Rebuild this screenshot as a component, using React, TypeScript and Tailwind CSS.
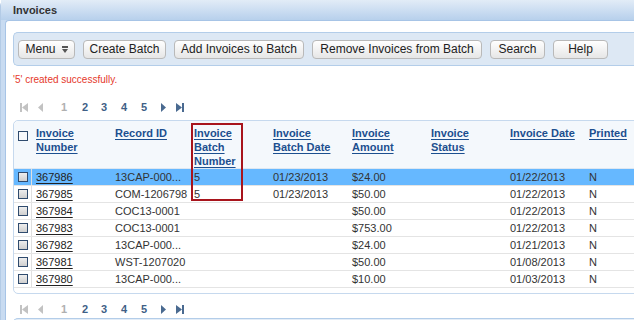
import React from "react";

interface InvoiceRow {
  number: string;
  recordId: string;
  batchNumber: string;
  batchDate: string;
  amount: string;
  status: string;
  invoiceDate: string;
  printed: string;
}

const rows: InvoiceRow[] = [
  { number: "367986", recordId: "13CAP-000...", batchNumber: "5", batchDate: "01/23/2013", amount: "$24.00", status: "", invoiceDate: "01/22/2013", printed: "N" },
  { number: "367985", recordId: "COM-1206798", batchNumber: "5", batchDate: "01/23/2013", amount: "$50.00", status: "", invoiceDate: "01/22/2013", printed: "N" },
  { number: "367984", recordId: "COC13-0001", batchNumber: "", batchDate: "", amount: "$50.00", status: "", invoiceDate: "01/22/2013", printed: "N" },
  { number: "367983", recordId: "COC13-0001", batchNumber: "", batchDate: "", amount: "$753.00", status: "", invoiceDate: "01/22/2013", printed: "N" },
  { number: "367982", recordId: "13CAP-000...", batchNumber: "", batchDate: "", amount: "$24.00", status: "", invoiceDate: "01/21/2013", printed: "N" },
  { number: "367981", recordId: "WST-1207020", batchNumber: "", batchDate: "", amount: "$50.00", status: "", invoiceDate: "01/08/2013", printed: "N" },
  { number: "367980", recordId: "13CAP-000...", batchNumber: "", batchDate: "", amount: "$10.00", status: "", invoiceDate: "01/03/2013", printed: "N" },
];

const headers: string[][] = [
  ["Invoice", "Number"],
  ["Record ID"],
  ["Invoice", "Batch", "Number"],
  ["Invoice", "Batch Date"],
  ["Invoice", "Amount"],
  ["Invoice", "Status"],
  ["Invoice Date"],
  ["Printed"],
];

function Pager() {
  const on = "#4a6a90";
  const off = "#c2c2c2";
  return (
    <div className="flex items-center h-[14px] text-[11px] font-bold leading-[14px]">
      <svg className="ml-[7px]" width="8" height="9" viewBox="0 0 8 9">
        <rect x="0" y="0" width="2" height="9" fill={off} />
        <polygon points="8,0 2,4.5 8,9" fill={off} />
      </svg>
      <svg className="ml-[10px]" width="5" height="9" viewBox="0 0 5 9">
        <polygon points="5,0 0,4.5 5,9" fill={off} />
      </svg>
      <span className="ml-[18px] w-[6px] text-[#b0b0b0]">1</span>
      <span className="ml-[15px] w-[6px] text-[#3f5f86]">2</span>
      <span className="ml-[13px] w-[6px] text-[#3f5f86]">3</span>
      <span className="ml-[14px] w-[6px] text-[#3f5f86]">4</span>
      <span className="ml-[14px] w-[6px] text-[#3f5f86]">5</span>
      <svg className="ml-[14px]" width="5" height="9" viewBox="0 0 5 9">
        <polygon points="0,0 5,4.5 0,9" fill={on} />
      </svg>
      <svg className="ml-[10px]" width="8" height="9" viewBox="0 0 8 9">
        <polygon points="0,0 6,4.5 0,9" fill={on} />
        <rect x="6" y="0" width="2" height="9" fill={on} />
      </svg>
    </div>
  );
}

function Check({ header }: { header?: boolean }) {
  return (
    <div
      className={`w-[10px] h-[10px] border border-[#2f4b6e] ${
        header ? "bg-[#f6f8fb]" : "bg-gradient-to-b from-[#eeeeee] to-[#cfcfcf]"
      }`}
    />
  );
}

function ToolButton({ label, w, children }: { label: string; w: string; children?: React.ReactNode }) {
  return (
    <div
      className={`${w} h-[19px] flex items-center justify-center gap-[6px] rounded-[4px] border border-[#b9b9b9] bg-gradient-to-b from-[#ffffff] to-[#e6e6e6] text-[12px] leading-[17px] text-[#222]`}
    >
      <span>{label}</span>
      {children}
    </div>
  );
}

export default function App() {
  return (
    <div className="relative w-[634px] h-[320px] overflow-hidden bg-white font-['Liberation_Sans',Arial,sans-serif]">
      <div className="w-[700px] h-[340px] rounded-tl-[6px] bg-[#c8dbf1] border-l border-[#b3cbe6]">
        <div className="h-[20px] pl-[12px] text-[11px] font-bold leading-[20px] text-[#333] bg-gradient-to-b from-[#e2ecf7] to-[#b7d0ec]">
          Invoices
        </div>
        <div className="ml-[4px] h-[320px] bg-white rounded-tl-[4px] border-l border-t border-[#a7c4e6] pl-[7px] pt-[11px]">
          {/* toolbar */}
          <div className="w-[700px] h-[34px] flex items-center gap-[8px] pl-[4px] rounded-l-[5px] border border-r-0 border-[#b3cde9] bg-[#dde8f4]">
            <ToolButton label="Menu" w="w-[57px]">
              <svg width="6" height="7" viewBox="0 0 6 7">
                <rect x="0" y="0" width="6" height="2" fill="#555" />
                <polygon points="0,3 6,3 3,7" fill="#555" />
              </svg>
            </ToolButton>
            <ToolButton label="Create Batch" w="w-[83px]" />
            <ToolButton label="Add Invoices to Batch" w="w-[130px]" />
            <ToolButton label="Remove Invoices from Batch" w="w-[170px]" />
            <ToolButton label="Search" w="w-[55px]" />
            <ToolButton label="Help" w="w-[55px]" />
          </div>

          <div className="mt-[7px] h-[14px] text-[10px] leading-[14px] text-[#e5392b]">
            '5' created successfully.
          </div>

          <div className="mt-[13px]">
            <Pager />
          </div>

          {/* table */}
          <div className="mt-[6px] w-[700px] rounded-[5px] border border-[#c6d9ee] pb-[5px]">
            <div className="flex h-[48px] bg-[#f4f8fc] rounded-t-[5px] border-b border-[#dde7f2]">
              <div className="w-[18px] pl-[4px] pt-[10px]">
                <Check header />
              </div>
              {headers.map((lines, i) => (
                <div key={i} className="w-[79px] pl-[4px] pt-[5px] text-[11px] font-bold leading-[14px] text-[#1c4f8f]">
                  {lines.map((l) => (
                    <div key={l}>
                      <span className="underline underline-offset-[2px]">{l}</span>
                    </div>
                  ))}
                </div>
              ))}
            </div>
            {rows.map((r, i) => (
              <div
                key={r.number}
                className={`flex h-[17px] border-b border-[#e4e4e4] text-[11px] leading-[16px] text-[#333] ${
                  i === 0 ? "bg-[#66b8ff]" : ""
                }`}
              >
                <div className="w-[18px] pl-[4px] pt-[3px] border-r border-[#e0e0e0]">
                  <Check />
                </div>
                <div className="w-[79px] pl-[4px]">
                  <span className="underline underline-offset-[2px] text-[#222]">{r.number}</span>
                </div>
                <div className="w-[79px] pl-[4px]">{r.recordId}</div>
                <div className="w-[79px] pl-[4px]">{r.batchNumber}</div>
                <div className="w-[79px] pl-[4px]">{r.batchDate}</div>
                <div className="w-[79px] pl-[4px]">{r.amount}</div>
                <div className="w-[79px] pl-[4px]">{r.status}</div>
                <div className="w-[79px] pl-[4px]">{r.invoiceDate}</div>
                <div className="w-[79px] pl-[4px]">{r.printed}</div>
              </div>
            ))}
          </div>

          <div className="mt-[8px]">
            <Pager />
          </div>

          <div className="mt-[2px] w-[700px] h-[20px] rounded-tl-[5px] border-l border-t border-[#b3cde9] bg-[#e4edf7]" />
        </div>
      </div>

      {/* highlight box around batch number column */}
      <div className="absolute left-[191px] top-[123px] w-[52px] h-[78px] border-2 border-[#a8141c]" />
    </div>
  );
}
